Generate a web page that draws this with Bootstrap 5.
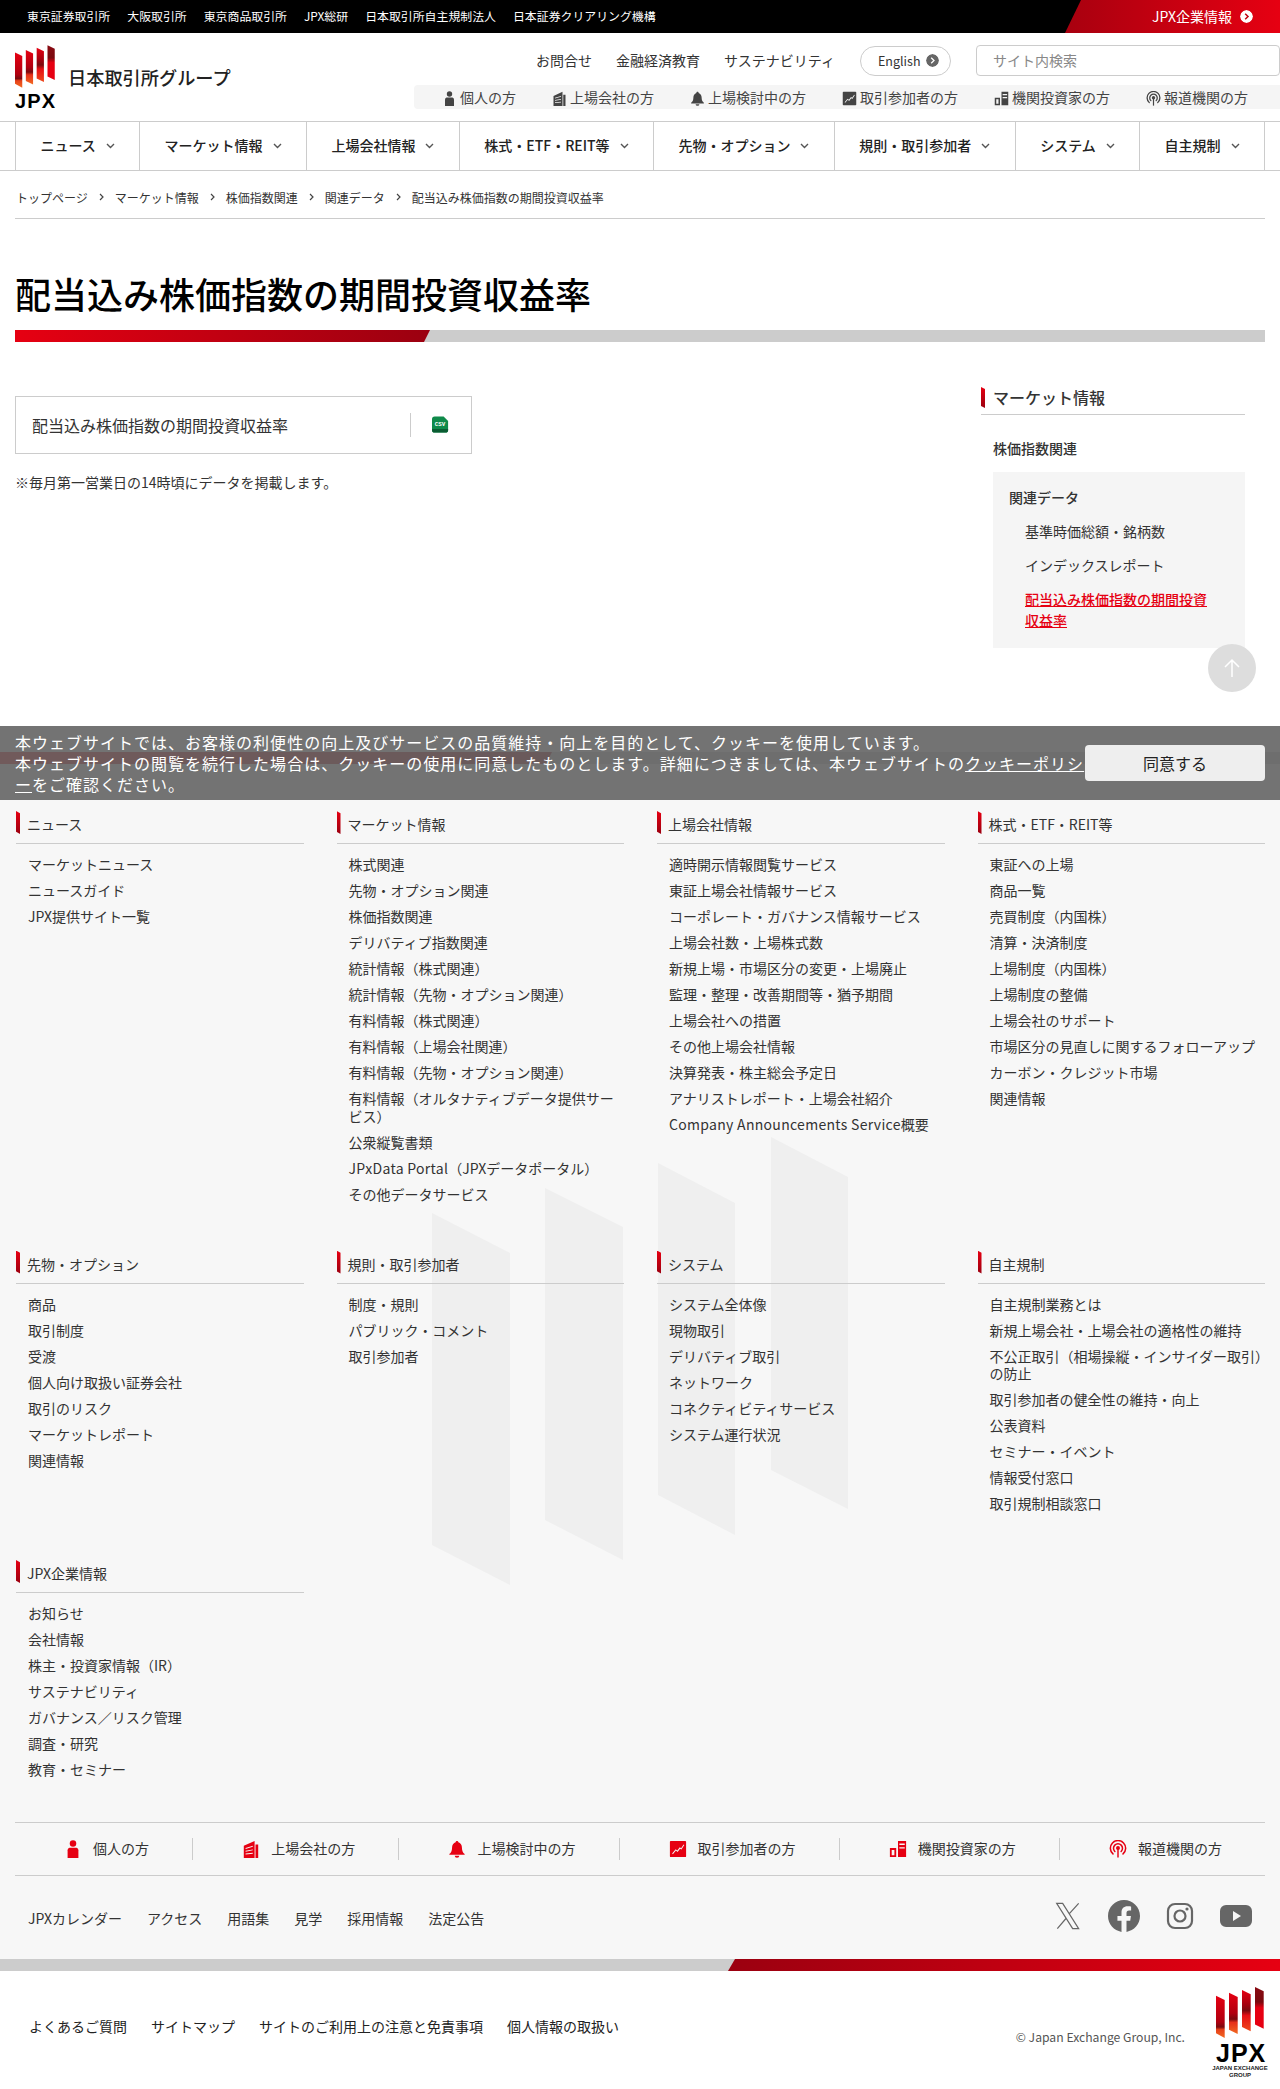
<!DOCTYPE html>
<html lang="ja">
<head>
<meta charset="utf-8">
<title>配当込み株価指数の期間投資収益率</title>
<link href="https://cdn.jsdelivr.net/npm/bootstrap@5.3.0/dist/css/bootstrap.min.css" rel="stylesheet">
<style>
body{font-family:"Noto Sans CJK JP","Noto Sans",sans-serif;font-size:14px;color:#333;background:#fff;line-height:1.25}
a{color:inherit;text-decoration:none}
.page-shell{position:relative;width:1280px;overflow:hidden}
.topbar{height:33px;background:#000;color:#fff;font-size:11.9px;padding-left:27px}
.topbar-links{gap:17px}
.corp-link{width:215px;height:33px;background:linear-gradient(90deg,#a8000f,#e60012);clip-path:polygon(16px 0,100% 0,100% 100%,0 100%);font-size:14px;padding-left:87px;gap:8px}
.round-ico{width:13px;height:13px;border-radius:50%;flex:none}
.brand-area{height:88px}
.brand-logo{padding:12px 0 0 15px;width:300px;gap:13px}
.mark-col{width:40px;line-height:1}
.mark-jpx{font-family:"Liberation Sans",sans-serif;font-weight:700;font-size:20px;letter-spacing:1.2px;color:#000;display:block;margin-top:3px;line-height:20px}
.brand-name{font-size:18.2px;font-weight:500;color:#222;margin-top:21px;line-height:22px}
.util-col{padding-top:12px}
.util-row{gap:24px;height:31px}
.pill-lang{width:91px;height:30px;border:1px solid #ccc;border-radius:15px;font-size:12.5px;padding-left:17px;gap:6px;margin-left:1px}
.site-search{width:304px;height:31px;border:1px solid #ccc;border-radius:4px;padding-left:16px;color:#888;font-size:14px;margin-left:1px}
.persona-strip{height:24px;width:866px;background:#f5f5f5;border-radius:4px 0 0 4px;margin-top:9px;padding:2px 0 0 28px;gap:36px;color:#444}
.persona-strip span{gap:3px}
.persona-ico{width:15px;height:15px;flex:none;fill:currentColor}
.mainnav{height:50px;border-top:1px solid #ccc;border-bottom:1px solid #ccc;padding:0 15px}
.mainnav a{flex:1 1 auto;border-left:1px solid #ccc;font-weight:500;color:#222;gap:10px;padding:0 20px}
.mainnav a:last-child{border-right:1px solid #ccc}
.chev{width:9px;height:6px;flex:none}
.crumbs{margin:0 15px;height:48px;border-bottom:1px solid #ccc;font-size:12px;padding:5px 0 0 1px;gap:10px}
.crumb-chev{width:7px;height:8px}
.page-heading{margin:49px 15px 0;font-size:36px;font-weight:500;color:#000;line-height:50px;height:62px}
.title-rule{margin:0 15px;height:12px;background:#ccc}
.title-rule div{width:415px;height:12px;background:linear-gradient(90deg,#e60012,#9b0010);clip-path:polygon(0 0,100% 0,calc(100% - 6px) 100%,0 100%)}
.content-area{padding:45px 35px 104px 15px}
.file-col{padding-top:9px;width:457px}
.file-box{height:58px;border:1px solid #ccc;padding:0 22px 0 16px}
.file-name{font-size:16px}
.file-sep{border-left:1px solid #ccc;height:24px;padding-left:21px}
.file-note{margin:20px 0 0;font-size:14px}
.side-col{width:264px}
.side-head{height:28px;border-bottom:1px solid #ccc;gap:8px;font-size:16px;font-weight:500;color:#333}
.red-tick{width:4px;height:21px;background:linear-gradient(180deg,#e60012,#9b0010);clip-path:polygon(0 0,100% 10%,100% 100%,0 90%);flex:none}
.side-head span{line-height:21px}
.side-lv1{margin:24px 0 15px 12px;font-weight:500;line-height:18px}
.side-panel{margin-left:12px;background:#f5f5f5;padding:16px 16px 17px;height:176px}
.side-lv2{font-weight:500;line-height:18px;margin-bottom:15px}
.side-panel ul{margin:0;padding:0 14px 0 16px;list-style:none}
.side-panel li{line-height:21px;margin-bottom:13px}
.side-panel .here{color:#e60012;font-weight:500;text-decoration:underline}
.to-top{left:1208px;top:644px;width:48px;height:48px;border-radius:50%;background:#ddd;z-index:3}
.cookie-bar{left:0;top:726px;width:1280px;height:74px;background:rgba(100,100,100,.9);color:#fff;padding:6px 15px 0;z-index:5}
.cookie-text{width:1075px;margin-right:-5px;font-size:16px;letter-spacing:.063em;line-height:21px;line-break:loose}
.cookie-text a{text-decoration:underline}
.cookie-btn{width:180px;height:36px;background:#eee;border-radius:4px;font-size:16px;color:#222;margin-top:13px;position:relative}
.site-foot{position:relative;background:#f7f7f7}
.foot-watermark{left:0;top:0;z-index:0}
.band-top{height:12px;background:#ccc;position:relative}
.band-top div{width:552px;height:12px;background:linear-gradient(90deg,#e60012,#9b0010);clip-path:polygon(0 0,100% 0,calc(100% - 6px) 100%,0 100%)}
.foot-inner{position:relative;z-index:1;padding:47px 15px 0}
.foot-row{--bs-gutter-x:32px;--bs-gutter-y:0}
.foot-col{margin-bottom:39px}
.foot-col-last{margin-bottom:35px}
.foot-head{height:33px;border-bottom:1px solid #ccc;gap:7px;margin-left:1px;margin-bottom:12px}
.foot-head span{line-height:27px}
.foot-head .red-tick{height:23px}
.foot-list{padding:0 0 0 13px;margin:0;list-style:none}
.foot-list li{line-height:17.5px;margin-bottom:8.5px;color:#333}
.latin-wide{letter-spacing:.3px}
.persona-foot{height:54px;border-top:1px solid #ccc;border-bottom:1px solid #ccc}
.persona-foot a{flex:1 1 auto;gap:11px;height:22px;border-right:1px solid #ccc;padding:0 14px 0 20px}
.persona-foot a:last-child{border-right:0}
.persona-foot .persona-ico{width:18px;height:18px;color:#e60012}
.foot-extra{height:83px;padding:0 13px;gap:25px}
.foot-extra-links{gap:25px;padding-top:2px}
.social-row{gap:24px;margin-top:-4px}
.social-ico{width:32px;height:32px;fill:#666}
.band-bottom{height:12px;background:#ccc}
.band-bottom div{width:552px;height:12px;background:linear-gradient(90deg,#9b0010,#e60012);clip-path:polygon(7px 0,100% 0,100% 100%,0 100%)}
.end-row{height:118px;padding:0 16px 0 29px}
.end-links{gap:24px;padding-bottom:6px;color:#222;white-space:nowrap}
.end-right{gap:31px}
.copy-text{font-size:12.2px;color:#555;margin-top:14px;line-height:16px}
.end-logo{width:48px;text-align:center;padding-top:16px;line-height:1}
.end-logo b{display:block;font-family:"Liberation Sans",sans-serif;font-size:25px;line-height:24px;letter-spacing:1px;color:#000;margin-top:3px}
.end-logo small{display:block;font-family:"Liberation Sans",sans-serif;font-weight:700;font-size:6px;line-height:7px;color:#222;white-space:nowrap;margin:0 -4px}
</style>
</head>
<body>
<svg width="0" height="0" class="d-block" aria-hidden="true">
<defs>
<linearGradient id="lg1" x1="0" y1="0" x2="0" y2="1"><stop offset="0" stop-color="#e60012"/><stop offset=".62" stop-color="#b00010"/><stop offset=".74" stop-color="#7a0a0f"/><stop offset=".8" stop-color="#e6401a"/><stop offset="1" stop-color="#f26a21"/></linearGradient>
<linearGradient id="lg2" x1="0" y1="0" x2="0" y2="1"><stop offset="0" stop-color="#e60012"/><stop offset=".5" stop-color="#b00010"/><stop offset=".64" stop-color="#7a0a0f"/><stop offset=".72" stop-color="#e6301a"/><stop offset="1" stop-color="#f26a21"/></linearGradient>
<linearGradient id="lg3" x1="0" y1="0" x2="0" y2="1"><stop offset="0" stop-color="#e60012"/><stop offset=".34" stop-color="#a8000f"/><stop offset=".5" stop-color="#7a0a0f"/><stop offset=".62" stop-color="#e60f14"/><stop offset="1" stop-color="#ee4a1c"/></linearGradient>
<linearGradient id="lg4" x1="0" y1="0" x2="0" y2="1"><stop offset="0" stop-color="#8a0a12"/><stop offset=".36" stop-color="#7a0a0f"/><stop offset=".5" stop-color="#e60012"/><stop offset="1" stop-color="#e60012"/></linearGradient>
<symbol id="ic-person" viewBox="0 0 20 20"><circle cx="10" cy="4" r="3.6"/><path d="M4 20v-8.5C4 9 5.800 8.500 7 8.500h6c1.200 0 3 .5 3 3V20z"/></symbol>
<symbol id="ic-building" viewBox="0 0 20 20"><path fill-rule="evenodd" d="M2 6.500 14 1v19H2zM4 9v1l8-2.500v-1zM4 12v1l8-1.500v-1zM4 15v1l8-.8v-1z"/><path d="M15 5h3v15h-3z"/></symbol>
<symbol id="ic-bell" viewBox="0 0 20 20"><path d="M10 1c1 0 1.500.7 1.500 1.500C14 3.300 15.500 5.500 15.500 8.500c0 3.500 1 5.500 3 7v1h-17v-1c2-1.500 3-3.500 3-7 0-3 1.500-5.200 4-6C8.500 1.700 9 1 10 1z"/><path d="M7.500 17.500h5a2.500 2.200 0 0 1-5 0z"/></symbol>
<symbol id="ic-chart" viewBox="0 0 20 20"><path fill-rule="evenodd" d="M2 1h16a1 1 0 0 1 1 1v16a1 1 0 0 1-1 1H2a1 1 0 0 1-1-1V2a1 1 0 0 1 1-1zM3.500 15l.8.800 3.400-4 1.800 1.500 2.800-3.700 1.500 1L17 5.500l-.8-.6-2.700 4.200-1.500-1-2.800 3.700-1.800-1.500z"/></symbol>
<symbol id="ic-invest" viewBox="0 0 20 20"><path fill-rule="evenodd" d="M1 9h7v10H1zM3 11v6h3v-6z"/><path fill-rule="evenodd" d="M10 1h9v18h-9zM11.500 4v1.500h6V4zM11.500 8v1.500h6V8z"/></symbol>
<symbol id="ic-media" viewBox="0 0 20 20"><g fill="none" stroke="currentColor" stroke-width="1.700" stroke-linecap="round"><path d="M4.400 15.500a8.500 8.500 0 1 1 11.200 0"/><path d="M6.500 12.800a5 5 0 1 1 7 0"/></g><circle cx="10" cy="9" r="2.200"/><path d="M9.200 10h1.600v9.500H9.200z"/></symbol>
<symbol id="ic-chev" viewBox="0 0 9 6"><path d="M1 1l3.500 3.500L8 1" fill="none" stroke="#555" stroke-width="1.400"/></symbol>
<symbol id="jpx-stripes" viewBox="0 0 48 51"><path fill="url(#lg1)" d="M0 8.700 8.700 13v38L0 46.300z"/><path fill="url(#lg2)" d="M13 5.800 21.700 10v37L13 42.800z"/><path fill="url(#lg3)" d="M26 3 34.700 7.200v37L26 40z"/><path fill="url(#lg4)" d="M39 0 47.700 4.300v37.400L39 37.400z"/></symbol>
</defs>
</svg>

<div class="page-shell">
  <div class="topbar d-flex justify-content-between align-items-center">
    <div class="topbar-links d-flex">
      <a href="#">東京証券取引所</a><a href="#">大阪取引所</a><a href="#">東京商品取引所</a><a href="#">JPX総研</a><a href="#">日本取引所自主規制法人</a><a href="#">日本証券クリアリング機構</a>
    </div>
    <a href="#" class="corp-link d-flex align-items-center">JPX企業情報
      <svg class="round-ico" viewBox="0 0 13 13"><circle cx="6.500" cy="6.500" r="6.500" fill="#fff"/><path d="M5.200 3.800 8 6.500 5.200 9.200" fill="none" stroke="#c00010" stroke-width="1.500"/></svg>
    </a>
  </div>

  <header class="brand-area d-flex justify-content-between">
    <a href="#" class="brand-logo d-flex">
      <span class="mark-col d-block">
        <svg width="40" height="43" class="d-block"><use href="#jpx-stripes"/></svg>
        <span class="mark-jpx">JPX</span>
      </span>
      <span class="brand-name">日本取引所グループ</span>
    </a>
    <div class="util-col d-flex flex-column align-items-end">
      <div class="util-row d-flex align-items-center">
        <a href="#">お問合せ</a><a href="#">金融経済教育</a><a href="#">サステナビリティ</a>
        <a href="#" class="pill-lang d-flex align-items-center">English
          <svg class="round-ico" viewBox="0 0 13 13"><circle cx="6.500" cy="6.500" r="6.500" fill="#666"/><path d="M5.200 3.800 8 6.500 5.200 9.200" fill="none" stroke="#fff" stroke-width="1.300"/></svg>
        </a>
        <div class="site-search d-flex align-items-center">サイト内検索</div>
      </div>
      <nav class="persona-strip d-flex align-items-center">
        <span class="d-flex align-items-center"><svg class="persona-ico"><use href="#ic-person"/></svg><a href="#">個人の方</a></span>
        <span class="d-flex align-items-center"><svg class="persona-ico"><use href="#ic-building"/></svg><a href="#">上場会社の方</a></span>
        <span class="d-flex align-items-center"><svg class="persona-ico"><use href="#ic-bell"/></svg><a href="#">上場検討中の方</a></span>
        <span class="d-flex align-items-center"><svg class="persona-ico"><use href="#ic-chart"/></svg><a href="#">取引参加者の方</a></span>
        <span class="d-flex align-items-center"><svg class="persona-ico"><use href="#ic-invest"/></svg><a href="#">機関投資家の方</a></span>
        <span class="d-flex align-items-center"><svg class="persona-ico"><use href="#ic-media"/></svg><a href="#">報道機関の方</a></span>
      </nav>
    </div>
  </header>

  <nav class="mainnav d-flex">
    <a href="#" class="d-flex align-items-center justify-content-center">ニュース<svg class="chev"><use href="#ic-chev"/></svg></a>
    <a href="#" class="d-flex align-items-center justify-content-center">マーケット情報<svg class="chev"><use href="#ic-chev"/></svg></a>
    <a href="#" class="d-flex align-items-center justify-content-center">上場会社情報<svg class="chev"><use href="#ic-chev"/></svg></a>
    <a href="#" class="d-flex align-items-center justify-content-center">株式・ETF・REIT等<svg class="chev"><use href="#ic-chev"/></svg></a>
    <a href="#" class="d-flex align-items-center justify-content-center">先物・オプション<svg class="chev"><use href="#ic-chev"/></svg></a>
    <a href="#" class="d-flex align-items-center justify-content-center">規則・取引参加者<svg class="chev"><use href="#ic-chev"/></svg></a>
    <a href="#" class="d-flex align-items-center justify-content-center">システム<svg class="chev"><use href="#ic-chev"/></svg></a>
    <a href="#" class="d-flex align-items-center justify-content-center">自主規制<svg class="chev"><use href="#ic-chev"/></svg></a>
  </nav>

  <div class="crumbs d-flex align-items-center">
    <a href="#">トップページ</a><svg class="crumb-chev" viewBox="0 0 7 8"><path d="M2 1l3 3-3 3" fill="none" stroke="#444" stroke-width="1.200"/></svg>
    <a href="#">マーケット情報</a><svg class="crumb-chev" viewBox="0 0 7 8"><path d="M2 1l3 3-3 3" fill="none" stroke="#444" stroke-width="1.200"/></svg>
    <a href="#">株価指数関連</a><svg class="crumb-chev" viewBox="0 0 7 8"><path d="M2 1l3 3-3 3" fill="none" stroke="#444" stroke-width="1.200"/></svg>
    <a href="#">関連データ</a><svg class="crumb-chev" viewBox="0 0 7 8"><path d="M2 1l3 3-3 3" fill="none" stroke="#444" stroke-width="1.200"/></svg>
    <span>配当込み株価指数の期間投資収益率</span>
  </div>

  <h1 class="page-heading">配当込み株価指数の期間投資収益率</h1>
  <div class="title-rule"><div></div></div>

  <main class="content-area d-flex justify-content-between">
    <section class="file-col">
      <div class="file-box d-flex justify-content-between align-items-center">
        <span class="file-name">配当込み株価指数の期間投資収益率</span>
        <a href="#" class="file-sep d-flex align-items-center">
          <svg width="17" height="18" viewBox="0 0 19 19"><path d="M3 0h10l5 5v10a3 3 0 0 1-3 3H3a3 3 0 0 1-3-3V3a3 3 0 0 1 3-3z" fill="#0f8a4a"/><path d="M0 14h18v1a3 3 0 0 1-3 3H3a3 3 0 0 1-3-3z" fill="#0a5c32"/><text x="9" y="11" text-anchor="middle" font-size="6.500" font-weight="700" font-family="Liberation Mono, monospace" fill="#fff">CSV</text></svg>
        </a>
      </div>
      <p class="file-note">※毎月第一営業日の14時頃にデータを掲載します。</p>
    </section>
    <aside class="side-col">
      <div class="side-head d-flex"><i class="red-tick"></i><span>マーケット情報</span></div>
      <div class="side-lv1">株価指数関連</div>
      <div class="side-panel">
        <div class="side-lv2">関連データ</div>
        <ul>
          <li><a href="#">基準時価総額・銘柄数</a></li>
          <li><a href="#">インデックスレポート</a></li>
          <li><a href="#" class="here">配当込み株価指数の期間投資収益率</a></li>
        </ul>
      </div>
    </aside>
  </main>

  <a href="#" class="to-top position-absolute d-flex align-items-center justify-content-center">
    <svg width="20" height="20" viewBox="0 0 20 20"><path d="M10 19V2M3 9l7-7 7 7" fill="none" stroke="#fff" stroke-width="1.500"/></svg>
  </a>

  <div class="cookie-bar position-absolute d-flex">
    <div class="cookie-text">本ウェブサイトでは、お客様の利便性の向上及びサービスの品質維持・向上を目的として、クッキーを使用しています。<br>本ウェブサイトの閲覧を続行した場合は、クッキーの使用に同意したものとします。詳細につきましては、本ウェブサイトの<a href="#">クッキーポリシー</a>をご確認ください。</div>
    <a href="#" class="cookie-btn d-flex align-items-center justify-content-center">同意する</a>
  </div>

  <footer class="site-foot">
    <svg class="foot-watermark position-absolute" width="1280" height="1200" viewBox="0 752 1280 1200" aria-hidden="true">
      <path fill="#efefef" d="M432 1213 510 1253V1585L432 1545z"/>
      <path fill="#efefef" d="M545 1188 623 1227V1560L545 1520z"/>
      <path fill="#efefef" d="M658 1163 735 1203V1535L658 1495z"/>
      <path fill="#efefef" d="M771 1137 848 1177V1509L771 1470z"/>
    </svg>
    <div class="band-top"><div></div></div>
    <div class="foot-inner">
      <div class="row row-cols-4 foot-row">
        <div class="col foot-col">
          <div class="foot-head d-flex"><i class="red-tick"></i><span>ニュース</span></div>
          <ul class="foot-list"><li><a href="#">マーケットニュース</a></li><li><a href="#">ニュースガイド</a></li><li><a href="#">JPX提供サイト一覧</a></li></ul>
        </div>
        <div class="col foot-col">
          <div class="foot-head d-flex"><i class="red-tick"></i><span>マーケット情報</span></div>
          <ul class="foot-list"><li><a href="#">株式関連</a></li><li><a href="#">先物・オプション関連</a></li><li><a href="#">株価指数関連</a></li><li><a href="#">デリバティブ指数関連</a></li><li><a href="#">統計情報（株式関連）</a></li><li><a href="#">統計情報（先物・オプション関連）</a></li><li><a href="#">有料情報（株式関連）</a></li><li><a href="#">有料情報（上場会社関連）</a></li><li><a href="#">有料情報（先物・オプション関連）</a></li><li><a href="#">有料情報（オルタナティブデータ提供サービス）</a></li><li><a href="#">公衆縦覧書類</a></li><li><a href="#"><span class="latin-wide">JPxData Portal</span>（JPXデータポータル）</a></li><li><a href="#">その他データサービス</a></li></ul>
        </div>
        <div class="col foot-col">
          <div class="foot-head d-flex"><i class="red-tick"></i><span>上場会社情報</span></div>
          <ul class="foot-list"><li><a href="#">適時開示情報閲覧サービス</a></li><li><a href="#">東証上場会社情報サービス</a></li><li><a href="#">コーポレート・ガバナンス情報サービス</a></li><li><a href="#">上場会社数・上場株式数</a></li><li><a href="#">新規上場・市場区分の変更・上場廃止</a></li><li><a href="#">監理・整理・改善期間等・猶予期間</a></li><li><a href="#">上場会社への措置</a></li><li><a href="#">その他上場会社情報</a></li><li><a href="#">決算発表・株主総会予定日</a></li><li><a href="#">アナリストレポート・上場会社紹介</a></li><li><a href="#"><span class="latin-wide">Company Announcements Service</span>概要</a></li></ul>
        </div>
        <div class="col foot-col">
          <div class="foot-head d-flex"><i class="red-tick"></i><span>株式・ETF・REIT等</span></div>
          <ul class="foot-list"><li><a href="#">東証への上場</a></li><li><a href="#">商品一覧</a></li><li><a href="#">売買制度（内国株）</a></li><li><a href="#">清算・決済制度</a></li><li><a href="#">上場制度（内国株）</a></li><li><a href="#">上場制度の整備</a></li><li><a href="#">上場会社のサポート</a></li><li><a href="#">市場区分の見直しに関するフォローアップ</a></li><li><a href="#">カーボン・クレジット市場</a></li><li><a href="#">関連情報</a></li></ul>
        </div>
        <div class="col foot-col">
          <div class="foot-head d-flex"><i class="red-tick"></i><span>先物・オプション</span></div>
          <ul class="foot-list"><li><a href="#">商品</a></li><li><a href="#">取引制度</a></li><li><a href="#">受渡</a></li><li><a href="#">個人向け取扱い証券会社</a></li><li><a href="#">取引のリスク</a></li><li><a href="#">マーケットレポート</a></li><li><a href="#">関連情報</a></li></ul>
        </div>
        <div class="col foot-col">
          <div class="foot-head d-flex"><i class="red-tick"></i><span>規則・取引参加者</span></div>
          <ul class="foot-list"><li><a href="#">制度・規則</a></li><li><a href="#">パブリック・コメント</a></li><li><a href="#">取引参加者</a></li></ul>
        </div>
        <div class="col foot-col">
          <div class="foot-head d-flex"><i class="red-tick"></i><span>システム</span></div>
          <ul class="foot-list"><li><a href="#">システム全体像</a></li><li><a href="#">現物取引</a></li><li><a href="#">デリバティブ取引</a></li><li><a href="#">ネットワーク</a></li><li><a href="#">コネクティビティサービス</a></li><li><a href="#">システム運行状況</a></li></ul>
        </div>
        <div class="col foot-col">
          <div class="foot-head d-flex"><i class="red-tick"></i><span>自主規制</span></div>
          <ul class="foot-list"><li><a href="#">自主規制業務とは</a></li><li><a href="#">新規上場会社・上場会社の適格性の維持</a></li><li><a href="#" class="text-nowrap">不公正取引（相場操縦・インサイダー取引）<br>の防止</a></li><li><a href="#">取引参加者の健全性の維持・向上</a></li><li><a href="#">公表資料</a></li><li><a href="#">セミナー・イベント</a></li><li><a href="#">情報受付窓口</a></li><li><a href="#">取引規制相談窓口</a></li></ul>
        </div>
        <div class="col foot-col-last">
          <div class="foot-head d-flex"><i class="red-tick"></i><span>JPX企業情報</span></div>
          <ul class="foot-list"><li><a href="#">お知らせ</a></li><li><a href="#">会社情報</a></li><li><a href="#">株主・投資家情報（IR）</a></li><li><a href="#">サステナビリティ</a></li><li><a href="#">ガバナンス／リスク管理</a></li><li><a href="#">調査・研究</a></li><li><a href="#">教育・セミナー</a></li></ul>
        </div>
      </div>

      <nav class="persona-foot d-flex align-items-center">
        <a href="#" class="d-flex align-items-center justify-content-center"><svg class="persona-ico"><use href="#ic-person"/></svg>個人の方</a>
        <a href="#" class="d-flex align-items-center justify-content-center"><svg class="persona-ico"><use href="#ic-building"/></svg>上場会社の方</a>
        <a href="#" class="d-flex align-items-center justify-content-center"><svg class="persona-ico"><use href="#ic-bell"/></svg>上場検討中の方</a>
        <a href="#" class="d-flex align-items-center justify-content-center"><svg class="persona-ico"><use href="#ic-chart"/></svg>取引参加者の方</a>
        <a href="#" class="d-flex align-items-center justify-content-center"><svg class="persona-ico"><use href="#ic-invest"/></svg>機関投資家の方</a>
        <a href="#" class="d-flex align-items-center justify-content-center"><svg class="persona-ico"><use href="#ic-media"/></svg>報道機関の方</a>
      </nav>

      <div class="foot-extra d-flex justify-content-between align-items-center">
        <div class="foot-extra-links d-flex"><a href="#">JPXカレンダー</a><a href="#">アクセス</a><a href="#">用語集</a><a href="#">見学</a><a href="#">採用情報</a><a href="#">法定公告</a></div>
        <div class="social-row d-flex align-items-center">
          <a href="#"><svg class="social-ico d-block" viewBox="0 0 24 24"><path fill="none" stroke="#666" stroke-width=".9" d="M3.500 2.500h4.500l12 19h-4.500zM20 2.500 13.200 10M10.800 13.500 4 21.500"/></svg></a>
          <a href="#"><svg class="social-ico d-block" viewBox="0 0 24 24"><path d="M24 12.073c0-6.627-5.373-12-12-12s-12 5.373-12 12c0 5.990 4.388 10.954 10.125 11.854v-8.385H7.078v-3.470h3.047V9.430c0-3.007 1.792-4.669 4.533-4.669 1.312 0 2.686.235 2.686.235v2.953H15.830c-1.491 0-1.956.925-1.956 1.874v2.250h3.328l-.532 3.470h-2.796v8.385C19.612 23.027 24 18.062 24 12.073z"/></svg></a>
          <a href="#"><svg class="social-ico d-block" viewBox="0 0 32 32"><rect x="4" y="4" width="24" height="24" rx="7" fill="none" stroke="#666" stroke-width="2.200"/><circle cx="16" cy="16" r="5.500" fill="none" stroke="#666" stroke-width="2.200"/><circle cx="23" cy="9" r="1.600"/></svg></a>
          <a href="#"><svg class="social-ico d-block" viewBox="0 0 32 32"><path fill-rule="evenodd" d="M6 5h20a6 6 0 0 1 6 6v10a6 6 0 0 1-6 6H6a6 6 0 0 1-6-6V11a6 6 0 0 1 6-6zM13 11v10l8-5z"/></svg></a>
        </div>
      </div>
    </div>
  </footer>
  <div class="band-bottom d-flex justify-content-end"><div></div></div>

  <div class="end-row d-flex justify-content-between">
    <div class="end-links d-flex align-items-center"><a href="#">よくあるご質問</a><a href="#">サイトマップ</a><a href="#">サイトのご利用上の注意と免責事項</a><a href="#">個人情報の取扱い</a></div>
    <div class="end-right d-flex">
      <div class="copy-text align-self-center">© Japan Exchange Group, Inc.</div>
      <div class="end-logo">
        <svg width="48" height="51" class="d-block"><use href="#jpx-stripes"/></svg>
        <b>JPX</b>
        <small>JAPAN EXCHANGE<br>GROUP</small>
      </div>
    </div>
  </div>
</div>
<script src="https://cdn.jsdelivr.net/npm/bootstrap@5.3.0/dist/js/bootstrap.bundle.min.js"></script>
</body>
</html>
